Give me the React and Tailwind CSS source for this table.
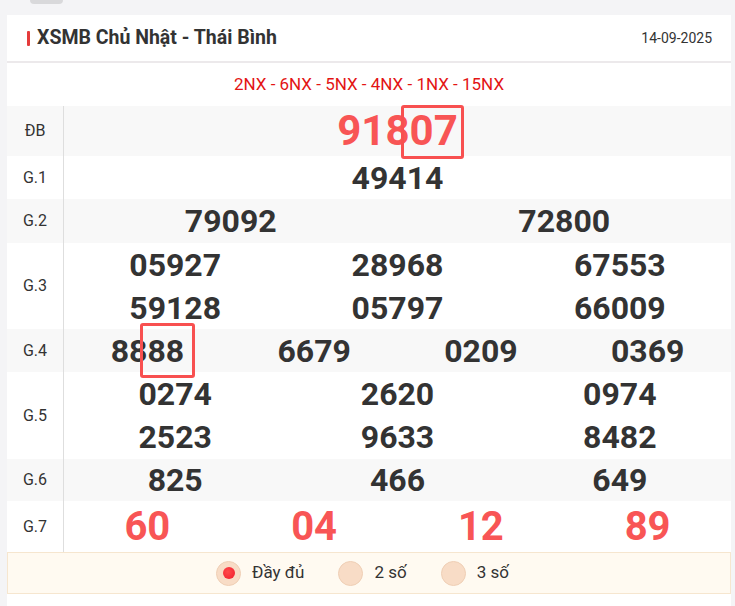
import React, { useState } from "react";

const rows = [
  { label: "G.1", cols: 1, nums: ["49414"], bg: "bg-white", h: "h-[43px]" },
  { label: "G.2", cols: 2, nums: ["79092", "72800"], bg: "bg-[#f8f8f8]", h: "h-[44px]" },
  { label: "G.3", cols: 3, nums: ["05927", "28968", "67553", "59128", "05797", "66009"], bg: "bg-white", h: "h-[86px]" },
];

const rows2 = [
  { label: "G.5", cols: 3, nums: ["0274", "2620", "0974", "2523", "9633", "8482"], bg: "bg-white", h: "h-[87px]" },
  { label: "G.6", cols: 3, nums: ["825", "466", "649"], bg: "bg-[#f8f8f8]", h: "h-[42px]" },
];

const gridCols = {
  1: "grid-cols-1",
  2: "grid-cols-2",
  3: "grid-cols-3",
  4: "grid-cols-4",
};

const Row = ({ label, bg, h, children }) => (
  <div className={`flex ${bg} ${h}`}>
    <div className="w-[57px] shrink-0 border-r border-[#dedede] flex items-center justify-center text-[16px] text-[#333]">
      {label}
    </div>
    <div className="flex-1">{children}</div>
  </div>
);

const NumGrid = ({ cols, nums }) => (
  <div className={`grid ${gridCols[cols]} h-full auto-rows-fr`}>
    {nums.map((n, i) => (
      <div
        key={i}
        className="flex items-center justify-center text-[32px] font-bold text-[#333] leading-none"
      >
        {n}
      </div>
    ))}
  </div>
);

const App = () => {
  const [mode, setMode] = useState(0);
  const options = ["Đầy đủ", "2 số", "3 số"];

  return (
    <div
      className="min-h-screen bg-[#f4f4f6] pt-[15px] pl-[7px] pr-[4px]"
      style={{ fontFamily: "Roboto, 'Noto Sans', sans-serif" }}
    >
      {/* nut phia tren, bi cat */}
      <div className="absolute top-0 left-[30px] w-[33px] h-[4px] rounded-b-[8px] bg-[#d9d9db]" />

      <div className="bg-white">
        {/* Header */}
        <div className="h-[48px] flex items-center justify-between pl-[20px] pr-[19px] border-b-2 border-[#ece9eb]">
          <div className="flex items-center gap-[7px]">
            <span className="w-[3px] h-[15px] bg-[#e53b3b] rounded-[1px]" />
            <span className="text-[19.5px] font-bold text-[#333]">XSMB Chủ Nhật - Thái Bình</span>
          </div>
          <span className="text-[14px] text-[#333]">14-09-2025</span>
        </div>

        {/* Ma dac biet */}
        <div className="h-[43px] flex items-center justify-center text-[17px] text-[#e31414]">
          2NX - 6NX - 5NX - 4NX - 1NX - 15NX
        </div>

        {/* DB */}
        <Row label="ĐB" bg="bg-[#f8f8f8]" h="h-[50px]">
          <div className="h-full flex items-center justify-center text-[42px] font-bold text-[#f85555] leading-none">
            <span>918</span>
            <span className="relative">
              07
              <span className="absolute -left-[9px] -right-[6px] -top-[5px] -bottom-[7px] border-[3px] border-[#f85050] rounded-[3px]" />
            </span>
          </div>
        </Row>

        {rows.map((r) => (
          <Row key={r.label} label={r.label} bg={r.bg} h={r.h}>
            <NumGrid cols={r.cols} nums={r.nums} />
          </Row>
        ))}

        {/* G.4 */}
        <Row label="G.4" bg="bg-[#f8f8f8]" h="h-[43px]">
          <div className="grid grid-cols-4 h-full">
            <div className="flex items-center justify-center text-[32px] font-bold text-[#333] leading-none">
              <span>88</span>
              <span className="relative">
                88
                <span className="absolute -left-[7px] -right-[11px] -top-[12px] -bottom-[11px] border-[3px] border-[#f85050] rounded-[3px]" />
              </span>
            </div>
            {["6679", "0209", "0369"].map((n) => (
              <div key={n} className="flex items-center justify-center text-[32px] font-bold text-[#333] leading-none">
                {n}
              </div>
            ))}
          </div>
        </Row>

        {rows2.map((r) => (
          <Row key={r.label} label={r.label} bg={r.bg} h={r.h}>
            <NumGrid cols={r.cols} nums={r.nums} />
          </Row>
        ))}

        {/* G.7 */}
        <Row label="G.7" bg="bg-white" h="h-[51px]">
          <div className="grid grid-cols-4 h-full">
            {["60", "04", "12", "89"].map((n) => (
              <div key={n} className="flex items-center justify-center text-[40px] font-bold text-[#f85555] leading-none">
                {n}
              </div>
            ))}
          </div>
        </Row>

        {/* Chon kieu hien thi */}
        <div className="h-[42px] bg-[#fffaf1] border border-[#f6e6cf] flex items-center justify-center gap-[34px] pr-[13px]">
          {options.map((o, i) => (
            <label key={o} className="flex items-center gap-[11px] cursor-pointer" onClick={() => setMode(i)}>
              <span className="w-[25px] h-[25px] rounded-full bg-[#f8dcc6] border border-[#efcfb5] flex items-center justify-center">
                {mode === i && (
                  <span className="w-[12px] h-[12px] rounded-full bg-[radial-gradient(circle_at_40%_40%,#ff4a4a,#f01c2c)]" />
                )}
              </span>
              <span className="text-[17px] text-[#333]">{o}</span>
            </label>
          ))}
        </div>
        <div className="h-[12px]" />
      </div>
    </div>
  );
};

export default App;
